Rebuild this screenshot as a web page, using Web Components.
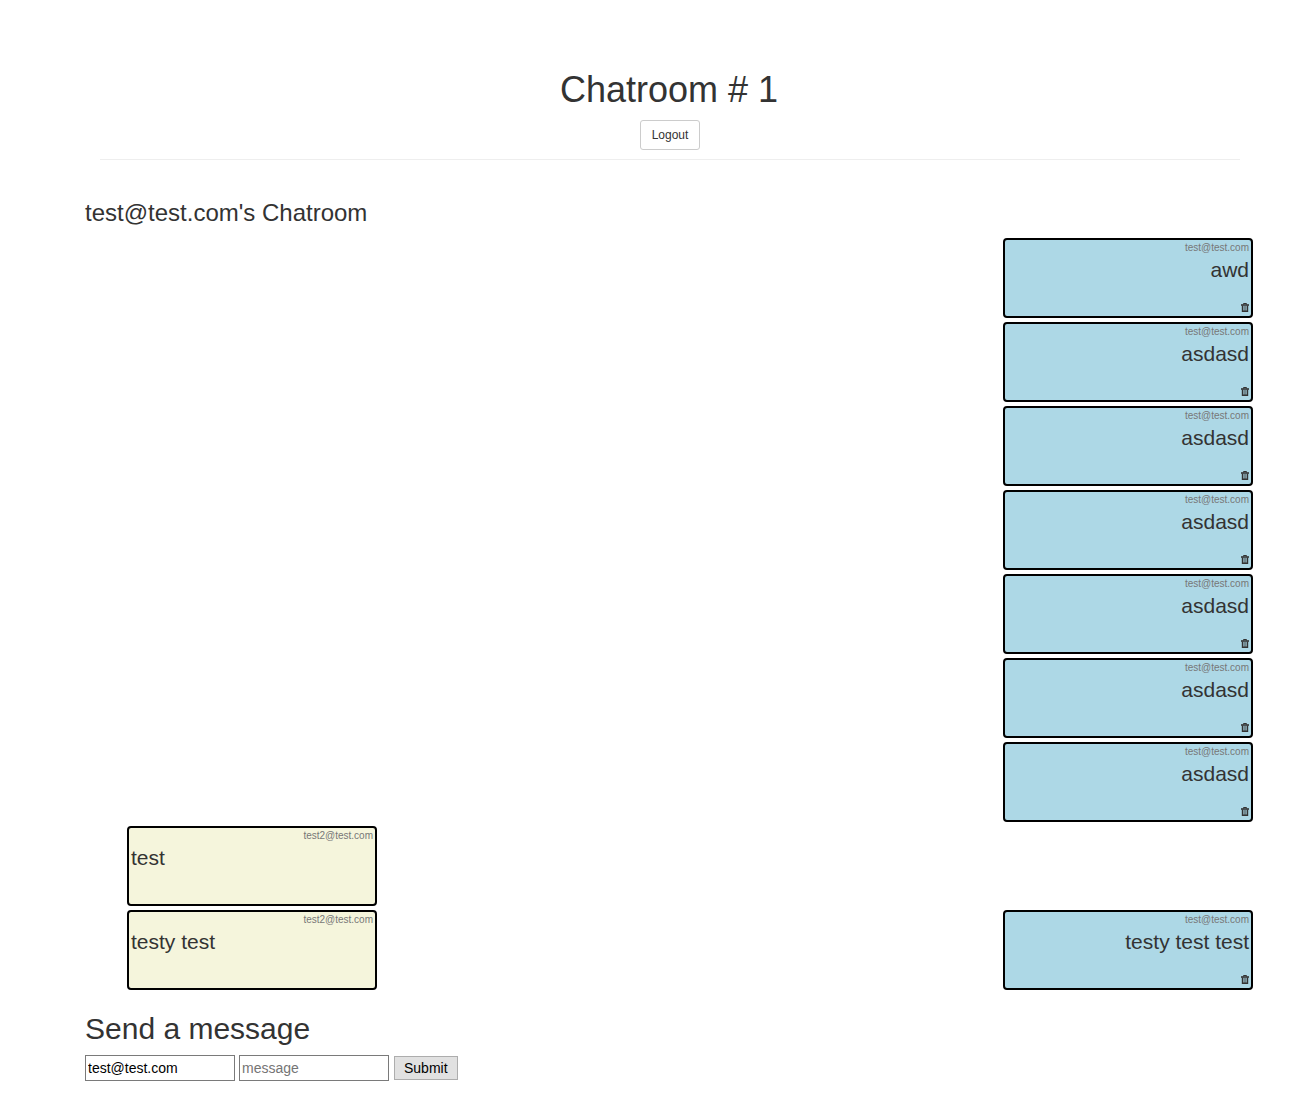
<!DOCTYPE html>
<html lang="en">
<head>
<meta charset="utf-8">
<meta name="viewport" content="width=device-width, initial-scale=1">
<title>Chatroom</title>
<style>
  body {
    margin: 0 0 0 45px;
    background: #fff;
    color: #333;
    font: 14px/20px "Liberation Sans", Arial, sans-serif;
  }
</style>
</head>
<body>
<chat-app>
  <chat-header slot="header">Chatroom # 1</chat-header>
  <chat-log>
    <span slot="title">test@test.com's Chatroom</span>
    <chat-row><chat-message mine author="test@test.com">awd</chat-message></chat-row>
    <chat-row><chat-message mine author="test@test.com">asdasd</chat-message></chat-row>
    <chat-row><chat-message mine author="test@test.com">asdasd</chat-message></chat-row>
    <chat-row><chat-message mine author="test@test.com">asdasd</chat-message></chat-row>
    <chat-row><chat-message mine author="test@test.com">asdasd</chat-message></chat-row>
    <chat-row><chat-message mine author="test@test.com">asdasd</chat-message></chat-row>
    <chat-row><chat-message mine author="test@test.com">asdasd</chat-message></chat-row>
    <chat-row><chat-message author="test2@test.com">test</chat-message></chat-row>
    <chat-row>
      <chat-message author="test2@test.com">testy test</chat-message>
      <chat-message mine author="test@test.com">testy test test</chat-message>
    </chat-row>
  </chat-log>
  <chat-composer user="test@test.com">Send a message</chat-composer>
</chat-app>

<script>
class ShadowElement extends HTMLElement {
  constructor() {
    super();
    this.attachShadow({ mode: "open" });
  }
  connectedCallback() {
    this.shadowRoot.innerHTML = this.render();
  }
}

customElements.define("chat-app", class extends ShadowElement {
  render() {
    return `
      <style>
        :host { display: block; box-sizing: border-box; max-width: 1170px; margin: 0 auto; padding: 70px 0 38px; }
        main { display: block; }
      </style>
      <slot name="header"></slot>
      <main><slot></slot></main>`;
  }
});

customElements.define("chat-header", class extends ShadowElement {
  render() {
    return `
      <style>
        :host { display: block; margin: 0 15px; }
        header { display: flex; flex-direction: column; align-items: center; padding-bottom: 9px; border-bottom: 1px solid #eee; }
        h1 { margin: 0 0 10px; padding-right: 2px; font-size: 36px; line-height: 40px; font-weight: 500; }
        button {
          min-width: 60px; padding: 5px 10px; border: 1px solid #ccc; border-radius: 3px; background: #fff;
          color: #333; font: 12px/18px "Liberation Sans", Arial, sans-serif; cursor: pointer;
        }
        button:hover { background: #e6e6e6; }
      </style>
      <header>
        <h1><slot></slot></h1>
        <button type="button">Logout</button>
      </header>`;
  }
});

customElements.define("chat-log", class extends ShadowElement {
  render() {
    return `
      <style>
        :host { display: block; margin-top: 40px; }
        h3 { margin: 0 0 10px; font-size: 24px; line-height: 26px; font-weight: 500; }
        .rows { display: flex; flex-direction: column; gap: 4px; padding: 2px 2px 2px 42px; }
      </style>
      <h3><slot name="title"></slot></h3>
      <div class="rows"><slot></slot></div>`;
  }
});

customElements.define("chat-row", class extends ShadowElement {
  render() {
    return `
      <style>:host { display: flex; gap: 4px; }</style>
      <slot></slot>`;
  }
});

customElements.define("chat-message", class extends ShadowElement {
  render() {
    const mine = this.hasAttribute("mine");
    return `
      <style>
        :host {
          display: flex; flex-direction: column; box-sizing: border-box;
          width: 250px; min-height: 80px; padding: 1px 2px 4px;
          border: 2px solid #000; border-radius: 4px; background: beige;
        }
        :host([mine]) { margin-left: auto; background: lightblue; text-align: right; }
        .author { color: #777; font-size: 10px; line-height: 14px; text-align: right; }
        p { margin: 0; font-size: 21px; line-height: 30px; }
        button { display: flex; margin: auto 0 0 auto; padding: 0; border: 0; background: none; color: #333; cursor: pointer; }
        svg { display: block; }
      </style>
      <div class="author">${this.getAttribute("author")}</div>
      <p><slot></slot></p>
      ${mine ? `<button type="button" aria-label="Delete message">
        <svg width="8" height="9" viewBox="0 0 8 9" fill="none" stroke="currentColor">
          <path d="M2.5 1.5V.5h3v1"/>
          <path d="M0 2h8" stroke-width="1.6"/>
          <path d="M1.5 2.5v5.8h5V2.5" stroke-width="1.4"/>
          <path d="M3.2 3v5M4.8 3v5" stroke-width=".7"/>
        </svg></button>` : ""}`;
  }
});

customElements.define("chat-composer", class extends ShadowElement {
  render() {
    return `
      <style>
        :host { display: block; margin-top: 20px; }
        h2 { margin: 0 0 10px; font-size: 30px; line-height: 33px; font-weight: 500; }
        form { display: flex; flex-wrap: wrap; align-items: center; gap: 4px; }
        input, button { box-sizing: border-box; font: 14px/20px "Liberation Sans", Arial, sans-serif; color: #000; }
        input { width: 150px; height: 26px; padding: 2px; border: 1px solid #7a7a7a; background: #fff; }
        input::placeholder { color: #757575; opacity: 1; }
        button { height: 24px; margin-left: 1px; padding: 1px 9px; border: 1px solid #adadad; background: #e1e1e1; }
      </style>
      <h2><slot></slot></h2>
      <form onsubmit="return false">
        <input type="text" name="user" aria-label="User" value="${this.getAttribute("user")}">
        <input type="text" name="message" aria-label="Message" placeholder="message">
        <button type="submit">Submit</button>
      </form>`;
  }
});
</script>
</body>
</html>
